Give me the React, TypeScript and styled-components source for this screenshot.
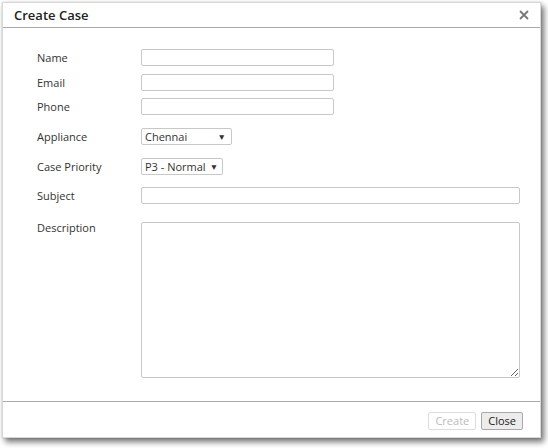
import React from 'react'
import styled, { createGlobalStyle } from 'styled-components'

const GlobalStyle = createGlobalStyle`
  html, body {
    margin: 0;
    padding: 0;
    background: #fff;
  }
  body {
    font-family: 'Open Sans', 'Noto Sans', sans-serif;
    font-size: 11px;
    color: #333;
  }
`

const Page = styled.div`
  width: 548px;
  height: 448px;
  padding: 2px 0 0 2px;
  box-sizing: border-box;
`

const Dialog = styled.div`
  width: 539px;
  height: 436px;
  box-sizing: border-box;
  background: #fff;
  border: 1px solid #d8d8d8;
  box-shadow: 3px 4px 6px rgba(0, 0, 0, 0.55), 0 0 2px rgba(0, 0, 0, 0.15);
  display: flex;
  flex-direction: column;
`

const Header = styled.div`
  height: 24px;
  flex: none;
  display: flex;
  align-items: center;
  justify-content: space-between;
  padding: 0 10px 0 11px;
  border-bottom: 1px solid #a9a9a9;
`

const Title = styled.h1`
  margin: 0;
  font-size: 13px;
  font-weight: 600;
  color: #222;
`

const CloseIcon = styled.button`
  border: 0;
  background: none;
  padding: 0;
  width: 12px;
  height: 12px;
  display: flex;
  align-items: center;
  justify-content: center;
  color: #777;
  cursor: pointer;
`

const Body = styled.div`
  flex: 1;
  padding: 21px 20px 0 34px;
  display: grid;
  grid-template-columns: 104px 1fr;
  align-content: start;
`

const Label = styled.label<{ $top: number; $align?: 'start' | 'center' }>`
  margin-top: ${({ $top }) => $top}px;
  align-self: ${({ $align }) => $align || 'center'};
  line-height: ${({ $align }) => ($align === 'start' ? '11px' : '16px')};
  color: #333;
`

const Control = styled.div<{ $top: number }>`
  margin-top: ${({ $top }) => $top}px;
  display: flex;
`

const TextInput = styled.input<{ $width?: number }>`
  box-sizing: border-box;
  height: 17px;
  width: ${({ $width }) => ($width ? `${$width}px` : '100%')};
  border: 1px solid #c8c8c8;
  border-radius: 2px;
  padding: 0 4px;
  font: inherit;
  outline: none;
`

const TextArea = styled.textarea`
  box-sizing: border-box;
  width: 100%;
  height: 156px;
  border: 1px solid #c8c8c8;
  border-radius: 2px;
  font: inherit;
  padding: 4px;
  outline: none;
  resize: both;
`

const Select = styled.div<{ $width: number }>`
  box-sizing: border-box;
  width: ${({ $width }) => $width}px;
  height: 17px;
  border: 1px solid #c8c8c8;
  border-radius: 2px;
  display: flex;
  align-items: center;
  justify-content: space-between;
  gap: 4px;
  padding: 0 5px 0 3px;
  color: #333;
  line-height: 15px;
  white-space: nowrap;
`

const Arrow = styled.span`
  font-size: 8.5px;
  color: #333;
`

const Footer = styled.div`
  flex: none;
  box-sizing: border-box;
  height: 36px;
  border-top: 1px solid #a9a9a9;
  display: flex;
  justify-content: flex-end;
  align-items: flex-start;
  gap: 5px;
  padding: 10px 17px 0 0;
`

const Button = styled.button<{ $disabled?: boolean }>`
  box-sizing: border-box;
  height: 18px;
  padding: 0 6px;
  font: inherit;
  font-size: 11px;
  line-height: 16px;
  border-radius: 2px;
  border: 1px solid ${({ $disabled }) => ($disabled ? '#dddddd' : '#a8a8a8')};
  background: ${({ $disabled }) => ($disabled ? '#fff' : '#ececec')};
  color: ${({ $disabled }) => ($disabled ? '#bbbbbb' : '#222')};
  cursor: ${({ $disabled }) => ($disabled ? 'default' : 'pointer')};
`

export default function App() {
  return (
    <Page>
      <GlobalStyle />
      <Dialog>
        <Header>
          <Title>Create Case</Title>
          <CloseIcon aria-label="Close">
            <svg width="10" height="10" viewBox="0 0 10 10">
              <path d="M1 1 L9 9 M9 1 L1 9" stroke="currentColor" strokeWidth="1.8" />
            </svg>
          </CloseIcon>
        </Header>
        <Body>
          <Label $top={0}>Name</Label>
          <Control $top={0}>
            <TextInput $width={193} />
          </Control>

          <Label $top={8}>Email</Label>
          <Control $top={8}>
            <TextInput $width={193} />
          </Control>

          <Label $top={7}>Phone</Label>
          <Control $top={7}>
            <TextInput $width={193} />
          </Control>

          <Label $top={13}>Appliance</Label>
          <Control $top={13}>
            <Select $width={91}>
              <span>Chennai</span>
              <Arrow>▼</Arrow>
            </Select>
          </Control>

          <Label $top={13}>Case Priority</Label>
          <Control $top={13}>
            <Select $width={82}>
              <span>P3 - Normal</span>
              <Arrow>▼</Arrow>
            </Select>
          </Control>

          <Label $top={12}>Subject</Label>
          <Control $top={12}>
            <TextInput />
          </Control>

          <Label $top={18} $align="start">Description</Label>
          <Control $top={18}>
            <TextArea />
          </Control>
        </Body>
        <Footer>
          <Button $disabled disabled>Create</Button>
          <Button>Close</Button>
        </Footer>
      </Dialog>
    </Page>
  )
}
